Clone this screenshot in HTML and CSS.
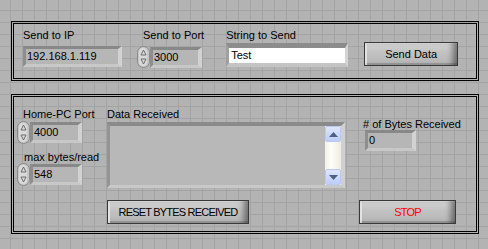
FILE: index.html
```html
<!DOCTYPE html>
<html lang="en">
<head>
  <meta charset="UTF-8" />
  <title>UDP Sender / Receiver</title>
  <link rel="stylesheet" href="styles.css">
</head>
<body>
  <div class="panel">

    <section class="frame frame-send">
      <div class="ctl ctl-ip">
        <div class="lbl">Send to IP</div>
        <div class="field ip">192.168.1.119</div>
      </div>
      <div class="ctl ctl-port">
        <div class="lbl">Send to Port</div>
        <div class="num">
          <svg class="spin" width="13" height="22" viewBox="0 0 13 22">
            <rect x="0.5" y="0.5" width="12" height="21" rx="6" fill="#c6c6c6" stroke="#8a8a8a"/>
            <rect x="2" y="2" width="8" height="18" rx="4" fill="#d9d9d9"/>
            <path d="M6.5 4 L9 9 L4 9 Z" fill="none" stroke="#6c6c6c"/>
            <path d="M6.5 18 L9 13 L4 13 Z" fill="none" stroke="#6c6c6c"/>
          </svg>
          <div class="field port">3000</div>
        </div>
      </div>
      <div class="ctl ctl-str">
        <div class="lbl">String to Send</div>
        <div class="strframe"><div class="strbox">Test</div></div>
      </div>
      <button class="btn send">Send Data</button>
    </section>

    <section class="frame frame-recv">
      <div class="recv-row">
        <div class="col-left">
          <div class="lbl">Home-PC Port</div>
          <div class="num">
            <svg class="spin" width="13" height="23" viewBox="0 0 13 23">
              <rect x="0.5" y="0.5" width="12" height="22" rx="6" fill="#c6c6c6" stroke="#8a8a8a"/>
              <rect x="2" y="2" width="8" height="19" rx="4" fill="#d9d9d9"/>
              <path d="M6.5 4 L9 9 L4 9 Z" fill="none" stroke="#6c6c6c"/>
              <path d="M6.5 19 L9 14 L4 14 Z" fill="none" stroke="#6c6c6c"/>
            </svg>
            <div class="field small">4000</div>
          </div>
          <div class="lbl lbl-max">max bytes/read</div>
          <div class="num">
            <svg class="spin" width="13" height="23" viewBox="0 0 13 23">
              <rect x="0.5" y="0.5" width="12" height="22" rx="6" fill="#c6c6c6" stroke="#8a8a8a"/>
              <rect x="2" y="2" width="8" height="19" rx="4" fill="#d9d9d9"/>
              <path d="M6.5 4 L9 9 L4 9 Z" fill="none" stroke="#6c6c6c"/>
              <path d="M6.5 19 L9 14 L4 14 Z" fill="none" stroke="#6c6c6c"/>
            </svg>
            <div class="field small">548</div>
          </div>
        </div>

        <div class="col-data">
          <div class="lbl">Data Received</div>
          <div class="textarea">
            <div class="scroll">
              <div class="sbtn">
                <svg width="9" height="5" viewBox="0 0 9 5"><path d="M4.5 0 L9 5 L0 5 Z" fill="#4d6185"/></svg>
              </div>
              <div class="track"></div>
              <div class="sbtn">
                <svg width="9" height="5" viewBox="0 0 9 5"><path d="M0 0 L9 0 L4.5 5 Z" fill="#4d6185"/></svg>
              </div>
            </div>
          </div>
        </div>

        <div class="col-bytes">
          <div class="lbl">&#35; of Bytes Received</div>
          <div class="field bytes">0</div>
        </div>
      </div>

      <div class="btn-row">
        <button class="btn reset">RESET BYTES RECEIVED</button>
        <button class="btn stop">STOP</button>
      </div>
    </section>

  </div>
</body>
</html>
```

FILE: styles.css
```css
body {
  margin: 0;
  width: 488px;
  height: 249px;
  overflow: hidden;
  font-family: "Liberation Sans", Arial, sans-serif;
  font-size: 11px;
  color: #000;
  background-color: #b3b3b3;
  background-image:
    linear-gradient(to right, #a4a4a4 1px, transparent 1px),
    linear-gradient(to bottom, #a4a4a4 1px, transparent 1px);
  background-size: 12px 12px;
  background-position: 10px 10px;
}

.panel {
  padding-top: 21px;
  padding-left: 11px;
}

.frame {
  box-sizing: border-box;
  width: 468px;
  border: 3px double #000;
  display: flex;
}

.lbl {
  line-height: 13px;
  white-space: nowrap;
}

/* fields */
.field {
  box-sizing: border-box;
  height: 21px;
  line-height: 15px;
  padding-left: 1px;
  background: #b6b6b6;
  border-style: solid;
  border-width: 3px 4px 3px 3px;
  border-color: #888 #d2d2d2 #c8c8c8 #8e8e8e;
  white-space: nowrap;
}

.num {
  display: flex;
  align-items: center;
}

.spin {
  display: block;
  flex: none;
}

/* send frame */
.frame-send {
  height: 60px;
  padding-top: 5px;
  margin-bottom: 13px;
}

.ctl-ip {
  margin-left: 9px;
}

.ctl-ip .lbl,
.ctl-port .lbl {
  margin-bottom: 4px;
}

.field.ip {
  width: 99px;
  padding-left: 1px;
}

.ctl-port {
  margin-left: 15px;
}

.ctl-port .lbl {
  padding-left: 6px;
}

.field.port {
  width: 52px;
}

.ctl-str {
  margin-left: 22px;
}

.strframe {
  box-sizing: border-box;
  width: 122px;
  height: 24px;
  margin-top: 1px;
  border-style: solid;
  border-width: 5px 3px 4px 3px;
  border-color: #8c8c8c #d4d4d4 #c4c4c4 #a0a0a0;
}

.strbox {
  height: 15px;
  line-height: 15px;
  padding-left: 2px;
  background: #fff;
}

/* buttons */
.btn {
  box-sizing: border-box;
  height: 24px;
  padding: 0;
  font-family: inherit;
  font-size: 11px;
  color: #000;
  border: 1px solid #3a3a3a;
  background: linear-gradient(to bottom, #d2d2d2, #c2c2c2 45%, #b4b4b4);
  box-shadow:
    inset -7px 0 6px -3px rgba(0, 0, 0, 0.45),
    inset 3px 2px 0 -1px #e2e2e2,
    inset 0 -2px 0 #9a9a9a;
}

.btn.send {
  width: 94px;
  margin-left: 16px;
  margin-top: 13px;
}

/* receive frame */
.frame-recv {
  height: 140px;
  flex-direction: column;
  padding-top: 11px;
}

.recv-row {
  display: flex;
  align-items: flex-start;
}

.col-left {
  flex: none;
  width: 65px;
  margin-left: 3px;
}

.col-left .lbl {
  padding-left: 6px;
}

.col-left .lbl-max {
  margin-top: 7px;
  padding-left: 7px;
  margin-bottom: -1px;
}

.field.small {
  width: 52px;
}

.col-data {
  flex: none;
  margin-left: 25px;
}

.col-data .lbl {
  margin-bottom: 1px;
}

.textarea {
  box-sizing: border-box;
  width: 238px;
  height: 66px;
  background: #b8b8b8;
  border-style: solid;
  border-width: 4px 4px 3px 3px;
  border-color: #8a8a8a #d0d0d0 #c8c8c8 #949494;
  display: flex;
  justify-content: flex-end;
}

.scroll {
  width: 16px;
  display: flex;
  flex-direction: column;
  background: linear-gradient(to right, #f3f1e8, #fdfdf9 40%, #eeebdf);
}

.sbtn {
  box-sizing: border-box;
  height: 16px;
  display: flex;
  align-items: center;
  justify-content: center;
  background: linear-gradient(to bottom, #dce6fd, #bccdf7);
  border: 1px solid #b9c9f1;
  border-radius: 2px;
}

.track {
  flex: 1;
}

.col-bytes {
  flex: none;
  margin-left: 18px;
  margin-top: 10px;
}

.col-bytes .lbl {
  margin-bottom: -1px;
}

.field.bytes {
  width: 51px;
  margin-left: 2px;
}

.btn-row {
  display: flex;
  margin-top: 12px;
}

.btn.reset {
  width: 142px;
  margin-left: 93px;
  letter-spacing: -0.8px;
}

.btn.stop {
  width: 97px;
  margin-left: 110px;
  color: #ff0000;
  letter-spacing: -0.8px;
}
```
